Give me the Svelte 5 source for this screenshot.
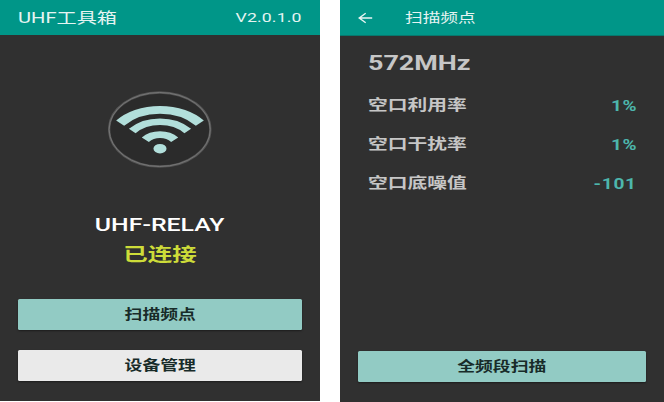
<script>
  const readings = [
    { label: '空口利用率', value: '1%' },
    { label: '空口干扰率', value: '1%' },
    { label: '空口底噪值', value: '-101' }
  ];
</script>

<main>
  <section class="screen home">
    <header>
      <h1 class="wide left">UHF工具箱</h1>
      <span class="wide right version">V2.0.1.0</span>
    </header>
    <div class="status">
      <svg class="signal" width="104" height="78" viewBox="0 0 104 78">
        <ellipse cx="51.7" cy="38.5" rx="50.6" ry="37" fill="#2b2b2b" stroke="#555" stroke-width="2.4" />
        <ellipse cx="51.7" cy="38.5" rx="50.6" ry="37" fill="none" stroke="#757575" stroke-width="1" />
        <g transform="translate(52 57.7) scale(1.36 1)" fill="none" stroke="#b2dfdb">
          <path d="M-29.3 -25.6A38.9 38.9 0 0 1 29.3 -25.6" stroke-width="7.8" />
          <path d="M-20.4 -17.7A27 27 0 0 1 20.4 -17.7" stroke-width="6.5" />
          <path d="M-10.8 -9A14.1 14.1 0 0 1 10.8 -9" stroke-width="6.8" />
          <circle r="4.8" fill="#b2dfdb" stroke="none" />
        </g>
      </svg>
      <strong class="wide device">UHF-RELAY</strong>
      <strong class="wide connected">已连接</strong>
    </div>
    <div class="actions">
      <button><span class="wide">扫描频点</span></button>
      <button class="light"><span class="wide">设备管理</span></button>
    </div>
  </section>

  <section class="screen scan">
    <header>
      <svg class="back" width="15" height="12" viewBox="0 0 15 12">
        <path d="M14.2 6H1.4M7.7 1.2L1.2 6L7.7 10.8" fill="none" stroke="#e8f5f3" stroke-width="1.4" />
      </svg>
      <h2 class="wide left">扫描频点</h2>
    </header>
    <div class="details">
      <h3><span class="wide left">572MHz</span></h3>
      {#each readings as item}
        <div class="row">
          <span class="wide left">{item.label}</span>
          <span class="wide right value">{item.value}</span>
        </div>
      {/each}
    </div>
    <div class="actions">
      <button><span class="wide">全频段扫描</span></button>
    </div>
  </section>
</main>

<style>
  :global(body) {
    background: #fff;
    overflow: hidden;
  }
  main {
    display: flex;
    justify-content: space-between;
    width: 664px;
    height: 402px;
    font-family: Roboto, 'Noto Sans CJK SC', sans-serif;
  }
  .screen {
    display: flex;
    flex-direction: column;
    box-sizing: border-box;
    background: #303030;
  }
  .home {
    width: 320px;
    height: 401px;
    padding-bottom: 20px;
  }
  .scan {
    width: 324px;
    height: 402px;
    padding-bottom: 20px;
  }
  header {
    display: flex;
    align-items: center;
    flex: none;
    box-sizing: border-box;
    height: 35px;
    padding: 0 18px;
    background: #009688;
    color: #e5f4f2;
  }
  .home header {
    justify-content: space-between;
    padding-top: 1px;
  }
  .scan header {
    height: 36px;
    gap: 32px;
    border-bottom: 1px solid #08776d;
  }
  h1, h2, h3 {
    margin: 0;
    font-weight: 400;
  }
  h1 {
    font-size: 14.8px;
  }
  h2 {
    font-size: 13px;
  }
  .version {
    font-size: 13px;
    letter-spacing: 0.1px;
  }
  .wide {
    display: inline-block;
    white-space: nowrap;
    line-height: 20px;
    transform: scaleX(1.36);
  }
  .left {
    transform-origin: left;
  }
  .right {
    transform-origin: right;
  }
  .status {
    display: flex;
    flex: 1;
    flex-direction: column;
    align-items: center;
    padding-top: 56px;
  }
  .signal {
    display: block;
    flex: none;
  }
  .device {
    margin-top: 46px;
    color: #fff;
    font-size: 18.3px;
    font-weight: 500;
  }
  .connected {
    margin-top: 10px;
    color: #cddc39;
    font-size: 18px;
    font-weight: 700;
  }
  .actions {
    display: flex;
    flex-direction: column;
    gap: 20px;
    padding: 0 18px;
  }
  button {
    height: 31px;
    padding: 0;
    border: 0;
    border-radius: 1.5px;
    background: #92cbc4;
    box-shadow: 0 1px 2px #0006;
    color: #182b29;
    font: 700 13.1px Roboto, 'Noto Sans CJK SC', sans-serif;
  }
  .light {
    background: #eaeaea;
  }
  .details {
    flex: 1;
    padding: 15px 27px 0 28px;
    color: #c6c6c6;
    font-weight: 700;
  }
  h3 {
    display: flex;
    align-items: center;
    height: 26px;
    margin-bottom: 9px;
    font-size: 19.8px;
    font-weight: 700;
  }
  .row {
    display: flex;
    align-items: center;
    justify-content: space-between;
    height: 39px;
    font-size: 14.5px;
  }
  .value {
    color: #4db6ac;
    font-size: 14px;
    letter-spacing: 0.5px;
  }
</style>
